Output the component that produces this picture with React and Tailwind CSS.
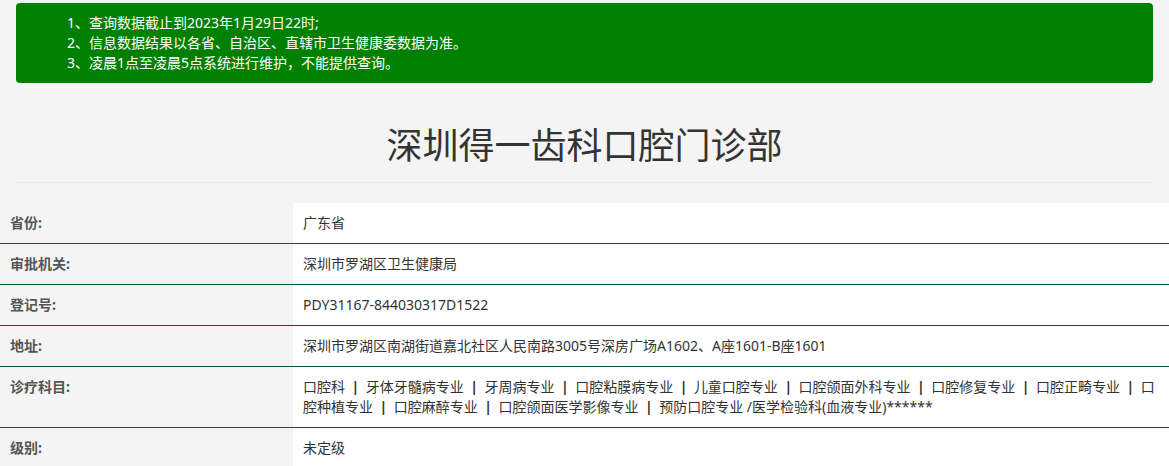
import React from "react";

const subjects = [
  "口腔科",
  "牙体牙髓病专业",
  "牙周病专业",
  "口腔粘膜病专业",
  "儿童口腔专业",
  "口腔颌面外科专业",
  "口腔修复专业",
  "口腔正畸专业",
  "口腔种植专业",
  "口腔麻醉专业",
  "口腔颌面医学影像专业",
  "预防口腔专业 /医学检验科(血液专业)******",
];

const rows = [
  { label: "省份:", value: "广东省" },
  { label: "审批机关:", value: "深圳市罗湖区卫生健康局" },
  { label: "登记号:", value: "PDY31167-844030317D1522" },
  {
    label: "地址:",
    value: "深圳市罗湖区南湖街道嘉北社区人民南路3005号深房广场A1602、A座1601-B座1601",
  },
  {
    label: "诊疗科目:",
    value: subjects.map((s, i) => (
      <React.Fragment key={i}>
        {i > 0 && <span className="mx-[6.5px] font-bold">|</span>}
        {s}
      </React.Fragment>
    )),
  },
  { label: "级别:", value: "未定级" },
];

const App = () => {
  return (
    <div
      className="min-h-screen bg-[#f4f4f4] pt-[3px]"
      style={{ fontFamily: '"Noto Sans", "Noto Sans CJK SC", sans-serif' }}
    >
      {/* Notice */}
      <div className="mx-4 h-[80px] rounded bg-[#008000] pl-[51px] pt-[10px] text-sm leading-[20px] text-white">
        <p>1、查询数据截止到2023年1月29日22时;</p>
        <p>2、信息数据结果以各省、自治区、直辖市卫生健康委数据为准。</p>
        <p>3、凌晨1点至凌晨5点系统进行维护，不能提供查询。</p>
      </div>

      {/* Title */}
      <h1 className="mt-[39px] mb-[12px] text-center text-[36px] leading-[48px] text-[#333]">
        深圳得一齿科口腔门诊部
      </h1>
      <div className="mx-4 border-t border-[#e6e6e6]" />

      {/* Detail table */}
      <div className="mt-[20px]">
        {rows.map((row, i) => (
          <div
            key={i}
            className={`grid grid-cols-[293px_1fr] ${
              i < rows.length - 1 ? "border-b border-[#0b5a2d]" : ""
            }`}
          >
            <div className="py-[10px] pl-[10px] text-sm font-bold leading-[20px] text-[#555]">
              {row.label}
            </div>
            <div className="bg-white py-[10px] pl-[10px] pr-[8px] text-sm leading-[20px] text-[#333]">
              {row.value}
            </div>
          </div>
        ))}
      </div>
    </div>
  );
};

export default App;
